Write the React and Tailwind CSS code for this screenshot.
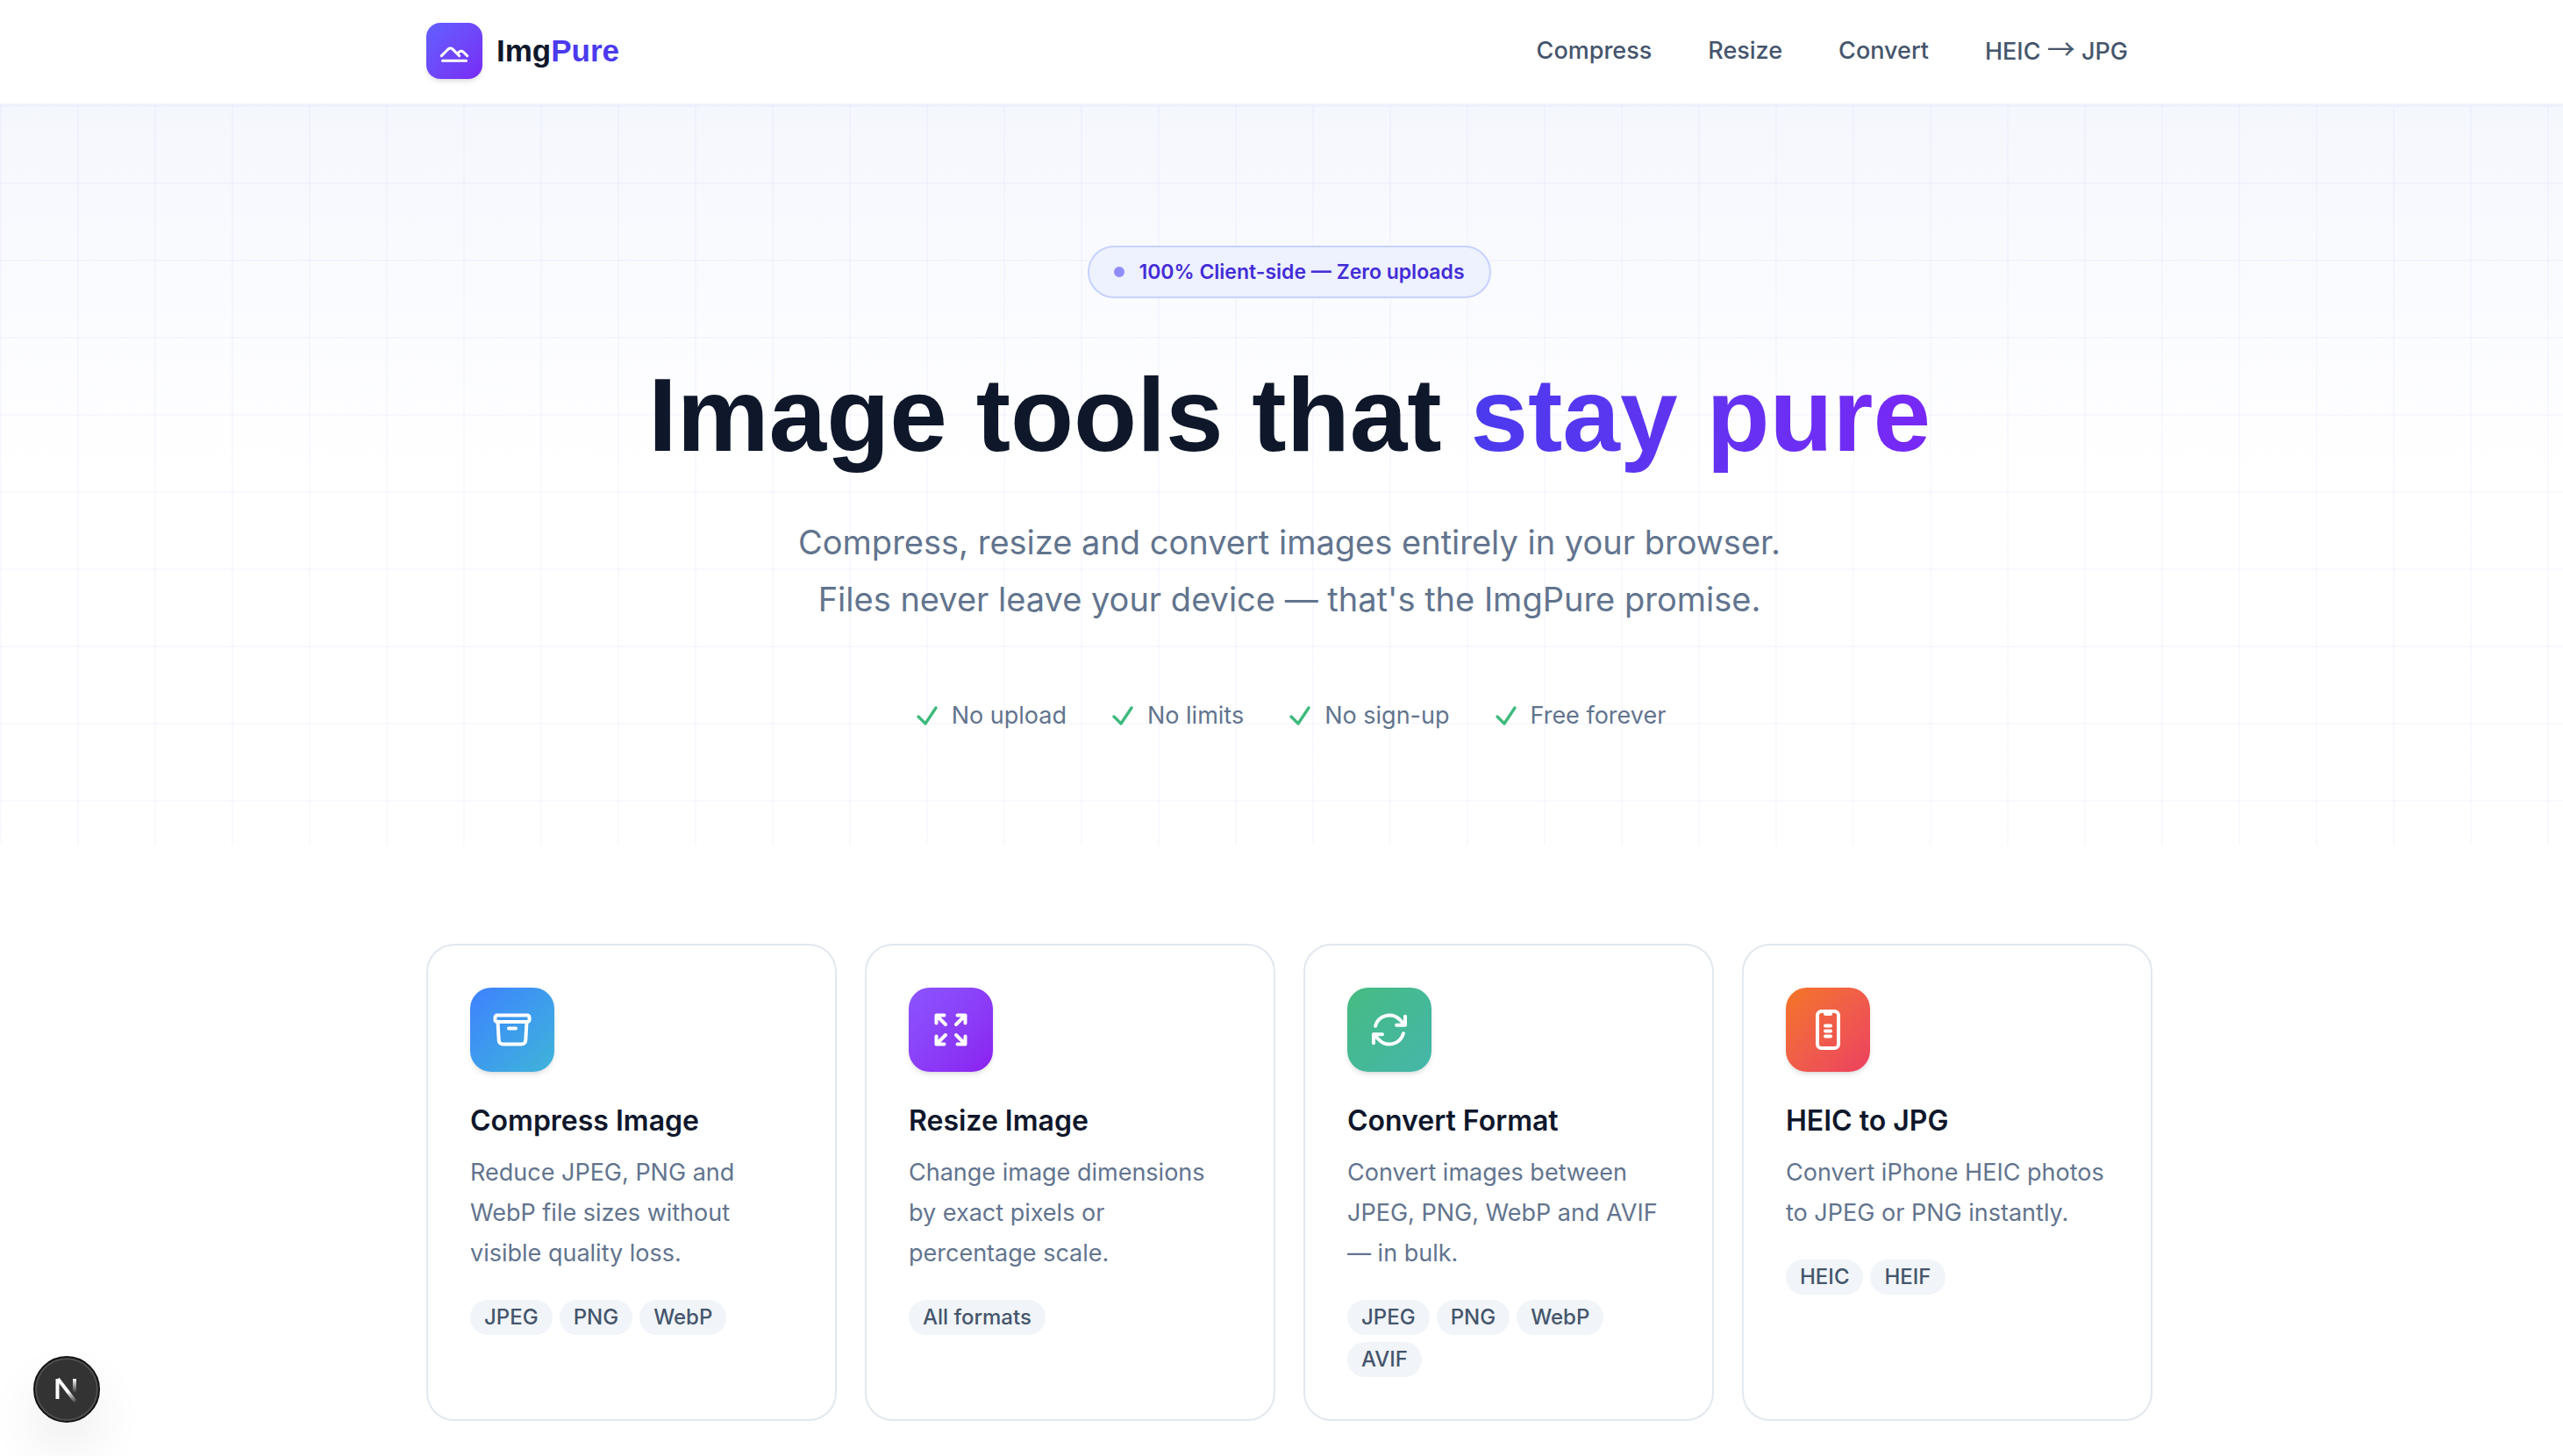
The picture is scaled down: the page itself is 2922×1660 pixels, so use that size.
import React from "react";

const navLinks = [
  { label: "Compress" },
  { label: "Resize" },
  { label: "Convert" },
  { label: "HEIC", target: "JPG" },
];

const perks = ["No upload", "No limits", "No sign-up", "Free forever"];

const tools = [
  {
    title: "Compress Image",
    description: "Reduce JPEG, PNG and WebP file sizes without visible quality loss.",
    tags: ["JPEG", "PNG", "WebP"],
    gradient: "from-[#4080ff] to-[#40b4d8]",
    icon: "m20.25 7.5-.625 10.632a2.25 2.25 0 0 1-2.247 2.118H6.622a2.25 2.25 0 0 1-2.247-2.118L3.75 7.5M10 11.25h4M3.375 7.5h17.25c.621 0 1.125-.504 1.125-1.125v-1.5c0-.621-.504-1.125-1.125-1.125H3.375c-.621 0-1.125.504-1.125 1.125v1.5c0 .621.504 1.125 1.125 1.125Z",
  },
  {
    title: "Resize Image",
    description: "Change image dimensions by exact pixels or percentage scale.",
    tags: ["All formats"],
    gradient: "from-[#8a55ff] to-[#8b1ef0]",
    icon: "M3.75 3.75v4.5m0-4.5h4.5m-4.5 0L9 9M3.75 20.25v-4.5m0 4.5h4.5m-4.5 0L9 15M20.25 3.75h-4.5m4.5 0v4.5m0-4.5L15 9m5.25 11.25h-4.5m4.5 0v-4.5m0 4.5L15 15",
  },
  {
    title: "Convert Format",
    description: "Convert images between JPEG, PNG, WebP and AVIF — in bulk.",
    tags: ["JPEG", "PNG", "WebP", "AVIF"],
    gradient: "from-[#46bb80] to-[#45b6aa]",
    icon: "M16.023 9.348h4.992v-.001M2.985 19.644v-4.992m0 0h4.992m-4.993 0 3.181 3.183a8.25 8.25 0 0 0 13.803-3.7M4.031 9.865a8.25 8.25 0 0 1 13.803-3.7l3.181 3.182m0-4.991v4.99",
  },
  {
    title: "HEIC to JPG",
    description: "Convert iPhone HEIC photos to JPEG or PNG instantly.",
    tags: ["HEIC", "HEIF"],
    gradient: "from-[#f47521] to-[#ec3f5f]",
    icon: "M10.5 1.5H8.25A2.25 2.25 0 0 0 6 3.75v16.5a2.25 2.25 0 0 0 2.25 2.25h7.5A2.25 2.25 0 0 0 18 20.25V3.75a2.25 2.25 0 0 0-2.25-2.25H13.5m-3 0V3h3V1.5m-3 0h3m-3 8.25h3m-3 3h3m-3 3h3",
  },
];

const StrokeIcon = ({ path, className, strokeWidth = 2 }) => (
  <svg
    viewBox="0 0 24 24"
    fill="none"
    stroke="currentColor"
    strokeWidth={strokeWidth}
    strokeLinecap="round"
    strokeLinejoin="round"
    className={className}
    aria-hidden="true"
  >
    <path d={path} />
  </svg>
);

const Header = () => (
  <header className="bg-white border-b-2 border-[#f0f3fd] pl-[18px]">
    <div className="mx-auto max-w-[2048px] px-10 pt-[26px] pb-7 flex items-center justify-between">
      <a href="#home" className="flex items-center gap-4">
        <span className="h-16 w-16 rounded-2xl bg-gradient-to-br from-[#615fff] to-[#7828f5] flex items-center justify-center shadow-md text-white">
          <StrokeIcon
            className="h-9 w-9"
            path="m2.25 15.75 5.159-5.159a2.25 2.25 0 0 1 3.182 0l5.159 5.159m-1.5-1.5 1.409-1.409a2.25 2.25 0 0 1 3.182 0l2.909 2.909M3 19.5h18"
          />
        </span>
        <span className="font-['Liberation_Sans',sans-serif] text-[35px] leading-10 font-bold text-slate-900">
          Img<span className="text-[#4b3aee]">Pure</span>
        </span>
      </a>
      <nav className="flex items-center gap-2">
        {navLinks.map((link) => (
          <a key={link.label} href="#tools" className="px-7 text-[27px] leading-10 font-medium text-slate-600">
            {link.label}
            {link.target && (
              <>
                {" "}
                <span className="font-['Noto_Sans_CJK_JP',sans-serif] text-[32px] leading-none font-normal">→</span>{" "}
                {link.target}
              </>
            )}
          </a>
        ))}
      </nav>
    </div>
  </header>
);

const Hero = () => (
  <section className="bg-[linear-gradient(to_right,rgba(99,102,241,0.04)_2px,transparent_2px),linear-gradient(to_bottom,rgba(99,102,241,0.04)_2px,transparent_2px),linear-gradient(to_bottom,#f5f7fe,#ffffff_50%)] bg-[size:88px_88px,88px_88px,100%_100%] pl-[18px]">
    <div className="mx-auto max-w-[2048px] px-10 pt-40 pb-32 flex flex-col items-center text-center">
      <div className="inline-flex items-center gap-4 rounded-full border-2 border-indigo-200 bg-[#eef1fe] px-7 py-3 text-[23px] leading-8 font-semibold text-indigo-700">
        <span className="h-3 w-3 rounded-full bg-[#8f8dfb]" />
        100% Client-side — Zero uploads
      </div>
      <h1 className="mt-16 font-['Liberation_Sans',sans-serif] text-[118px] leading-[138px] font-bold text-slate-900">
        Image tools that{" "}
        <span className="bg-gradient-to-r from-[#4a3aee] to-[#7828f5] bg-clip-text text-transparent">
          stay pure
        </span>
      </h1>
      <p className="mt-11 max-w-[1200px] text-[38px] leading-[65px] text-slate-500">
        Compress, resize and convert images entirely in your browser. Files never leave your device — that's the
        ImgPure promise.
      </p>
      <ul className="mt-20 flex flex-wrap justify-center gap-12 text-[27px] leading-10 text-slate-500">
        {perks.map((perk) => (
          <li key={perk} className="flex items-center gap-3">
            <StrokeIcon className="h-8 w-8 text-[#3dba7c]" path="m4.5 12.75 6 6 9-13.5" strokeWidth={2.5} />
            {perk}
          </li>
        ))}
      </ul>
    </div>
  </section>
);

const ToolCard = ({ tool }) => (
  <a href="#tool" className="block rounded-[32px] border-2 border-slate-200 bg-white p-12">
    <div
      className={`h-24 w-24 rounded-3xl bg-gradient-to-br ${tool.gradient} flex items-center justify-center text-white shadow-md`}
    >
      <StrokeIcon className="h-12 w-12" path={tool.icon} />
    </div>
    <h2 className="mt-8 text-[32px] leading-[48px] font-semibold text-slate-900">{tool.title}</h2>
    <p className="mt-3 text-[27px] leading-[46px] text-slate-500">{tool.description}</p>
    <div className="mt-[30px] flex flex-wrap gap-2">
      {tool.tags.map((tag) => (
        <span key={tag} className="rounded-full bg-slate-100 px-4 py-1 text-[24px] leading-8 font-medium text-slate-600">
          {tag}
        </span>
      ))}
    </div>
  </a>
);

const DevBadge = () => (
  <button
    type="button"
    aria-label="Open dev tools"
    className="fixed bottom-[38px] left-[38px] h-[76px] w-[76px] rounded-full border-2 border-[#141414] bg-[#333333] flex items-center justify-center shadow-[inset_0_0_0_2px_#505050,0_32px_64px_-8px_rgba(0,0,0,0.12)]"
  >
    <svg viewBox="0 0 28 32" fill="none" className="h-8 w-7" aria-hidden="true">
      <defs>
        <linearGradient id="slash" x1="16" y1="18" x2="25" y2="31" gradientUnits="userSpaceOnUse">
          <stop stopColor="#fff" />
          <stop offset="1" stopColor="#fff" stopOpacity="0" />
        </linearGradient>
        <linearGradient id="stem" x1="23" y1="4" x2="23" y2="20" gradientUnits="userSpaceOnUse">
          <stop stopColor="#fff" />
          <stop offset="1" stopColor="#fff" stopOpacity="0" />
        </linearGradient>
      </defs>
      <path d="M4 4l20 26" stroke="url(#slash)" strokeWidth="4" />
      <path d="M3.500 4v23" stroke="#fff" strokeWidth="4" />
      <path d="M23 4v16" stroke="url(#stem)" strokeWidth="4" />
    </svg>
  </button>
);

const App = () => {
  return (
    <div className="min-h-screen bg-white font-['Inter',sans-serif] overflow-x-hidden">
      <Header />
      <main>
        <Hero />
        <section id="tools" className="pl-[18px]">
          <div className="mx-auto max-w-[2048px] px-10 pt-28 pb-10 grid grid-cols-4 gap-8">
            {tools.map((tool) => (
              <ToolCard key={tool.title} tool={tool} />
            ))}
          </div>
        </section>
      </main>
      <DevBadge />
    </div>
  );
};

export default App;
